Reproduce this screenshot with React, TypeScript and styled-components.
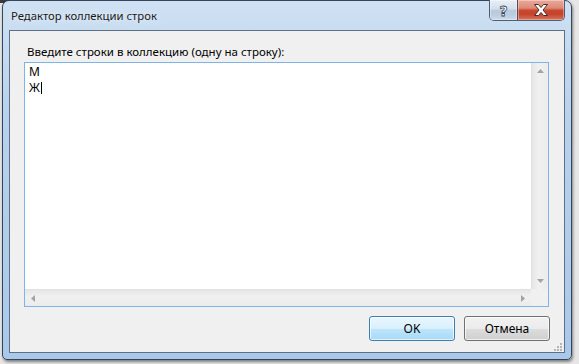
import styled, { createGlobalStyle } from "styled-components";

const GlobalStyle = createGlobalStyle`
  html, body {
    margin: 0;
    padding: 0;
  }
  body {
    width: 579px;
    height: 364px;
    overflow: hidden;
    background: #e6e6e6;
    font-family: "Noto Sans", "Open Sans", sans-serif;
  }
`;

const Desktop = styled.div`
  position: relative;
  width: 579px;
  height: 364px;
  padding-left: 2px;
  box-sizing: border-box;
`;

const BehindWindow = styled.div`
  position: absolute;
  left: 0;
  top: 0;
  width: 88px;
  height: 3px;
  background: #3a3a3a;
`;

const Window = styled.div`
  position: relative;
  width: 570px;
  height: 360px;
  box-sizing: border-box;
  display: flex;
  flex-direction: column;
  padding: 0 6px 6px;
  border: 1px solid #34465c;
  border-radius: 7px 7px 5px 5px;
  background: linear-gradient(180deg, #cfe1f3 0%, #b9d2ed 30%, #a9c8ea 100%);
  box-shadow: 1px 2px 3px rgba(0, 0, 0, 0.45);
`;

const TitleBar = styled.div`
  height: 29px;
  display: flex;
  align-items: center;
  justify-content: space-between;
  flex-shrink: 0;
`;

const Title = styled.span`
  padding-left: 2px;
  margin-top: -1px;
  font-size: 11.3px;
  color: #1b1b1b;
  text-shadow: 0 0 6px rgba(255, 255, 255, 0.9);
`;

const CaptionButtons = styled.div`
  align-self: flex-start;
  display: flex;
  height: 20px;
  margin-top: -1px;
  border: 1px solid #4f5d70;
  border-top: none;
  border-radius: 0 0 5px 5px;
  overflow: hidden;
`;

const CaptionButton = styled.div<{ $close?: boolean }>`
  width: ${(p) => (p.$close ? "46px" : "27px")};
  display: flex;
  align-items: center;
  justify-content: center;
  background: ${(p) =>
    p.$close
      ? "linear-gradient(180deg, #e9aa9c 0%, #dd8a78 40%, #c9482f 52%, #c54229 70%, #d67560 100%)"
      : "linear-gradient(180deg, #e9eff6 0%, #d3deeb 45%, #b9cadd 52%, #bccde0 75%, #cddbea 100%)"};
  border-left: ${(p) => (p.$close ? "1px solid #5c4a50" : "none")};
  box-shadow: inset 0 0 0 1px rgba(255, 255, 255, 0.35);
`;

const HelpGlyph = styled.span`
  font-family: "DejaVu Sans", sans-serif;
  font-weight: bold;
  font-size: 14px;
  color: #ffffff;
  -webkit-text-stroke: 0.8px #37475a;
  line-height: 1;
  margin-top: 1px;
`;

const Client = styled.div`
  position: relative;
  flex: 1;
  display: flex;
  flex-direction: column;
  padding: 13px 14px 11px 14px;
  border: 1px solid #5e7088;
  background: #f0f0f0;
`;

const Prompt = styled.div`
  height: 16px;
  line-height: 16px;
  padding-left: 3px;
  margin-bottom: 2px;
  font-size: 11.5px;
  color: #000;
`;

const TextBox = styled.div`
  width: 525px;
  height: 245px;
  box-sizing: border-box;
  border: 1px solid #7eb4ea;
  background: #fff;
  display: grid;
  grid-template-columns: 1fr 17px;
  grid-template-rows: 1fr 17px;
`;

const Lines = styled.div`
  padding: 1px 0 0 4px;
  font-size: 12px;
  line-height: 16px;
  color: #000;
`;

const Line = styled.div`
  display: flex;
  align-items: center;
  height: 16px;
`;

const Caret = styled.span`
  display: inline-block;
  width: 1px;
  height: 12px;
  margin-left: 1px;
  background: #000;
`;

const VScroll = styled.div`
  display: flex;
  flex-direction: column;
  justify-content: space-between;
  align-items: center;
  padding: 6px 0 6px;
  background: linear-gradient(90deg, #e6e6e6 0%, #f0f0f0 40%, #ececec 100%);
  border-left: 1px solid #e1e1e1;
`;

const HScroll = styled.div`
  display: flex;
  justify-content: space-between;
  align-items: center;
  padding: 0 6px 0 6px;
  background: linear-gradient(180deg, #e6e6e6 0%, #f0f0f0 40%, #ececec 100%);
  border-top: 1px solid #e1e1e1;
`;

const Corner = styled.div`
  background: #f0f0f0;
`;

const ButtonRow = styled.div`
  display: flex;
  justify-content: flex-end;
  gap: 9px;
  margin-top: 9px;
`;

const DialogButton = styled.div<{ $default?: boolean }>`
  width: 86px;
  height: 25px;
  box-sizing: border-box;
  display: flex;
  align-items: center;
  justify-content: center;
  font-size: 12px;
  color: #000;
  border-radius: 3px;
  border: 1px solid ${(p) => (p.$default ? "#3c7fb1" : "#707070")};
  background: ${(p) =>
    p.$default
      ? "linear-gradient(180deg, #eaf6fd 0%, #d9f0fc 50%, #bee6fd 51%, #a7d9f5 100%)"
      : "linear-gradient(180deg, #f2f2f2 0%, #ebebeb 50%, #dddddd 51%, #cfcfcf 100%)"};
  box-shadow: inset 0 0 0 1px rgba(255, 255, 255, 0.7);
`;

const Grip = styled.svg`
  position: absolute;
  right: 2px;
  bottom: 1px;
`;

const Arrow = ({ dir }: { dir: "up" | "down" | "left" | "right" }) => {
  const pts = {
    up: "0,4 7,4 3.5,0",
    down: "0,0 7,0 3.5,4",
    left: "4,0 4,7 0,3.5",
    right: "0,0 0,7 4,3.5",
  }[dir];
  const vertical = dir === "up" || dir === "down";
  return (
    <svg width={vertical ? 7 : 4} height={vertical ? 4 : 7}>
      <polygon points={pts} fill="#a3a3a3" />
    </svg>
  );
};

const CloseIcon = () => (
  <svg width="16" height="12" viewBox="0 0 16 12">
    <path
      d="M1.5 0.5h4l2.5 3 2.5-3h4l-4.5 5.5 4.5 5.5h-4l-2.5-3-2.5 3h-4l4.5-5.5z"
      fill="#fff"
      stroke="#4a2a24"
      strokeWidth="1"
      strokeLinejoin="round"
    />
  </svg>
);

export default function App() {
  return (
    <>
      <GlobalStyle />
      <Desktop>
        <BehindWindow />
        <Window>
          <TitleBar>
            <Title>Редактор коллекции строк</Title>
            <CaptionButtons>
              <CaptionButton>
                <HelpGlyph>?</HelpGlyph>
              </CaptionButton>
              <CaptionButton $close>
                <CloseIcon />
              </CaptionButton>
            </CaptionButtons>
          </TitleBar>
          <Client>
            <Prompt>Введите строки в коллекцию (одну на строку):</Prompt>
            <TextBox>
              <Lines>
                <Line>М</Line>
                <Line>
                  Ж<Caret />
                </Line>
              </Lines>
              <VScroll>
                <Arrow dir="up" />
                <Arrow dir="down" />
              </VScroll>
              <HScroll>
                <Arrow dir="left" />
                <Arrow dir="right" />
              </HScroll>
              <Corner />
            </TextBox>
            <ButtonRow>
              <DialogButton $default>OK</DialogButton>
              <DialogButton>Отмена</DialogButton>
            </ButtonRow>
            <Grip width="9" height="9" viewBox="0 0 9 9">
              {[
                [7, 1],
                [4, 4],
                [7, 4],
                [1, 7],
                [4, 7],
                [7, 7],
              ].map(([x, y]) => (
                <rect key={`${x}-${y}`} x={x} y={y} width="2" height="2" fill="#b5b5b5" />
              ))}
            </Grip>
          </Client>
        </Window>
      </Desktop>
    </>
  );
}
